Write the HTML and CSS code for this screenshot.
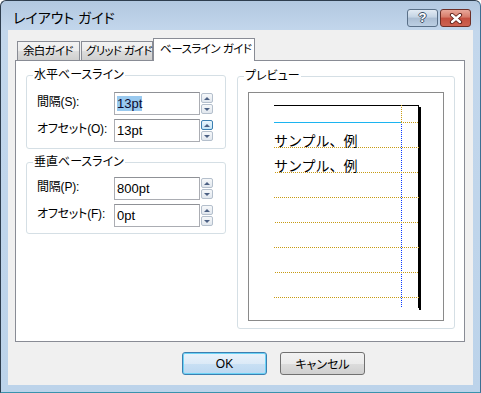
FILE: index.html
```html
<!DOCTYPE html>
<html lang="ja">
<head>
    <meta charset="UTF-8">
    <title>レイアウト ガイド</title>
    <link rel="stylesheet" href="styles.css">
</head>
<body>
    <div class="window">
        <div class="titlebar">
            <span class="title">レイアウト ガイド</span>
            <div class="caption-buttons">
                <span class="cap-btn help">?</span>
                <span class="cap-btn close">
                    <svg width="14" height="11" viewBox="0 0 14 11">
                        <path d="M3 2 L11 9 M11 2 L3 9" stroke="#5b1d16" stroke-width="4.2" stroke-linecap="round"/>
                        <path d="M3 2 L11 9 M11 2 L3 9" stroke="#fff" stroke-width="2.4" stroke-linecap="round"/>
                    </svg>
                </span>
            </div>
        </div>

        <div class="client">
            <div class="tabs">
                <div class="tab tab-margin">余白ガイド</div>
                <div class="tab tab-grid">グリッド ガイド</div>
                <div class="tab active">ベースライン ガイド</div>
            </div>

            <div class="tab-panel">
                <div class="left-col">
                    <fieldset class="group group-h">
                        <legend>水平ベースライン</legend>
                        <div class="field-row">
                            <label>間隔(S):</label>
                            <div class="textbox"><span class="selected">13pt</span></div>
                            <div class="spinner">
                                <span class="spin up"></span>
                                <span class="spin down"></span>
                            </div>
                        </div>
                        <div class="field-row">
                            <label>オフセット(O):</label>
                            <div class="textbox">13pt</div>
                            <div class="spinner">
                                <span class="spin up hot"></span>
                                <span class="spin down"></span>
                            </div>
                        </div>
                    </fieldset>

                    <fieldset class="group group-v">
                        <legend>垂直ベースライン</legend>
                        <div class="field-row">
                            <label>間隔(P):</label>
                            <div class="textbox">800pt</div>
                            <div class="spinner">
                                <span class="spin up"></span>
                                <span class="spin down"></span>
                            </div>
                        </div>
                        <div class="field-row">
                            <label>オフセット(F):</label>
                            <div class="textbox">0pt</div>
                            <div class="spinner">
                                <span class="spin up"></span>
                                <span class="spin down"></span>
                            </div>
                        </div>
                    </fieldset>
                </div>

                <fieldset class="group preview">
                    <legend>プレビュー</legend>
                    <div class="preview-page">
                        <svg width="194" height="227" viewBox="0 0 194 227" shape-rendering="crispEdges">
                            <!-- page edge -->
                            <rect x="25" y="12" width="145" height="1" fill="#000"/>
                            <rect x="169" y="12" width="1" height="203" fill="#000"/>
                            <rect x="170" y="14" width="2" height="203" fill="#000"/>
                            <!-- margin guides -->
                            <line x1="152.5" y1="12" x2="152.5" y2="29" stroke="#c89b14" stroke-dasharray="1 1"/>
                            <line x1="152.5" y1="29" x2="152.5" y2="215" stroke="#0a3cff" stroke-dasharray="1 1"/>
                            <line x1="25" y1="29.5" x2="152" y2="29.5" stroke="#1cb4f0"/>
                            <line x1="152" y1="29.5" x2="170" y2="29.5" stroke="#c89b14" stroke-dasharray="1 1"/>
                            <!-- baselines -->
                            <g stroke="#c89b14" stroke-dasharray="1 1">
                                <line x1="25" y1="54.5" x2="170" y2="54.5"/>
                                <line x1="26" y1="79.5" x2="170" y2="79.5"/>
                                <line x1="25" y1="104.5" x2="170" y2="104.5"/>
                                <line x1="26" y1="129.5" x2="170" y2="129.5"/>
                                <line x1="25" y1="154.5" x2="170" y2="154.5"/>
                                <line x1="26" y1="179.5" x2="170" y2="179.5"/>
                                <line x1="25" y1="204.5" x2="170" y2="204.5"/>
                            </g>
                            <text class="sample" x="25" y="53">サンプル、例</text>
                            <text class="sample" x="25" y="78">サンプル、例</text>
                        </svg>
                    </div>
                </fieldset>
            </div>

            <div class="dialog-buttons">
                <button class="btn default">OK</button>
                <button class="btn">キャンセル</button>
            </div>
        </div>
    </div>
</body>
</html>
```

FILE: styles.css
```css
html, body {
    margin: 0;
    padding: 0;
}
body {
    width: 481px;
    height: 393px;
    overflow: hidden;
    font-family: "Liberation Sans", "Noto Sans CJK JP", sans-serif;
    font-size: 12px;
    color: #000;
    font-feature-settings: "palt";
    white-space: nowrap;
}
.window {
    box-sizing: border-box;
    width: 481px;
    height: 393px;
    border: 1px solid #2e3d4e;
    border-right-color: #3e6f93;
    border-bottom-color: #3a92ad;
    border-radius: 6px 6px 0 0;
    background: linear-gradient(#b2c8e0, #c3d7ec 30px, #bcd3ea);
    padding: 0 7px 7px 7px;
}
.titlebar {
    height: 29px;
    display: flex;
    justify-content: space-between;
    align-items: flex-start;
}
.title {
    padding: 8px 0 0 5px;
    font-size: 14px;
    line-height: 18px;
    color: #000;
}
.caption-buttons {
    display: flex;
    gap: 2px;
    margin-top: 8px;
    margin-right: 2px;
}
.cap-btn {
    box-sizing: border-box;
    width: 31px;
    height: 18px;
    border-radius: 3px;
    display: flex;
    align-items: center;
    justify-content: center;
}
.help {
    border: 1px solid #5a7088;
    background: linear-gradient(#e3ebf4, #c3d3e4 45%, #aabdd3 50%, #bccfe3);
    color: #fff;
    font-weight: bold;
    font-size: 13px;
    line-height: 16px;
    text-shadow: 1px 0 0 #3b4f66, -1px 0 0 #3b4f66, 0 1px 0 #3b4f66, 0 -1px 0 #3b4f66;
}
.close {
    border: 1px solid #6e2f27;
    background: linear-gradient(#e9a89a, #d67a69 45%, #c44f3f 50%, #cd6352);
}
.close svg {
    display: block;
}
.client {
    height: 355px;
    box-sizing: border-box;
    background: #f0f0f0;
    padding: 8px 8px 0 7px;
}
.tabs {
    display: flex;
    align-items: flex-end;
    padding-left: 2px;
    margin-bottom: -1px;
    position: relative;
    z-index: 1;
}
.tab {
    box-sizing: border-box;
    height: 19px;
    margin-bottom: 1px;
    border: 1px solid #898c95;
    border-bottom: none;
    background: linear-gradient(#f3f3f3, #ebebeb 50%, #dddddd 50%, #cfcfcf);
    padding: 1px 0 0 5px;
    font-size: 11.5px;
    line-height: 17px;
    letter-spacing: -0.7px;
}
.tab-margin {
    width: 63px;
    margin-right: 1px;
}
.tab-grid {
    width: 72px;
    padding-left: 4px;
}
.tab.active {
    width: 102px;
    height: 23px;
    margin-bottom: 0;
    background: #fff;
    padding: 2px 0 0 6px;
    letter-spacing: -0.5px;
}
.tab-panel {
    box-sizing: border-box;
    width: 450px;
    height: 282px;
    border: 1px solid #898c95;
    background: #fff;
    display: flex;
    gap: 11px;
    padding: 7px 9px 0 10px;
}
.left-col {
    width: 200px;
    display: flex;
    flex-direction: column;
    gap: 6px;
}
.group {
    margin: 0;
    border: 1px solid #d5dfe5;
    border-radius: 3px;
    min-width: 0;
}
.group legend {
    padding: 0 1px;
    margin-left: -4px;
    line-height: 14px;
    font-size: 12px;
}
.group-h {
    padding: 10px 12px 6px 10px;
}
.group-v {
    padding: 8px 12px 6px 10px;
}
.field-row {
    display: flex;
    align-items: flex-start;
    margin-bottom: 4px;
}
.field-row:last-child {
    margin-bottom: 0;
}
.field-row label {
    width: 77px;
    flex: none;
    margin-top: 2px;
    line-height: 16px;
    letter-spacing: -0.2px;
}
.textbox {
    box-sizing: border-box;
    width: 86px;
    height: 23px;
    border: 1px solid #abadb3;
    border-top-color: #8f9196;
    background: #fff;
    padding: 3px 0 0 2px;
    font-size: 13px;
    line-height: 16px;
}
.selected {
    background: #99c9ef;
    color: #0a0a30;
}
.spinner {
    display: flex;
    flex-direction: column;
    gap: 1px;
    margin: 1px 0 0 1px;
}
.spin {
    box-sizing: border-box;
    width: 12px;
    height: 10px;
    border: 1px solid #b4bfcc;
    border-radius: 2px;
    background: linear-gradient(#f6f8fa, #e1e7ee);
    display: flex;
    align-items: center;
    justify-content: center;
}
.spin.hot {
    border-color: #3c7fb1;
    background: linear-gradient(#eaf6fd, #c4e4f6);
}
.spin::after {
    content: "";
    border-left: 3px solid transparent;
    border-right: 3px solid transparent;
}
.spin.up::after {
    border-bottom: 3px solid #4c6184;
}
.spin.down::after {
    border-top: 3px solid #4c6184;
}
.preview {
    width: 218px;
    box-sizing: border-box;
    margin-top: 1px;
    align-self: flex-start;
    padding: 9px 10px 7px 10px;
}
.preview-page {
    width: 196px;
    height: 229px;
    box-sizing: border-box;
    border: 1px solid #8a8a8a;
    background: #fff;
}
.preview-page svg {
    display: block;
}
.sample {
    font-family: "Noto Sans CJK JP", sans-serif;
    font-size: 14px;
    font-feature-settings: normal;
    fill: #000;
}
.dialog-buttons {
    display: flex;
    gap: 13px;
    margin-top: 10px;
    padding-left: 167px;
}
.btn {
    box-sizing: border-box;
    width: 85px;
    height: 23px;
    border: 1px solid #707070;
    border-radius: 3px;
    background: linear-gradient(#f2f2f2, #ebebeb 50%, #dddddd 50%, #cfcfcf);
    font-family: "Liberation Sans", "Noto Sans CJK JP", sans-serif;
    font-size: 12px;
    font-feature-settings: "palt";
    color: #000;
    padding: 0;
}
.btn.default {
    border-color: #3c7fb1;
    box-shadow: inset 0 0 0 1px #6cd3f6;
    background: linear-gradient(#eaf3fb, #dceaf7 50%, #c9e0f4 50%, #bcd8f1);
}
```
